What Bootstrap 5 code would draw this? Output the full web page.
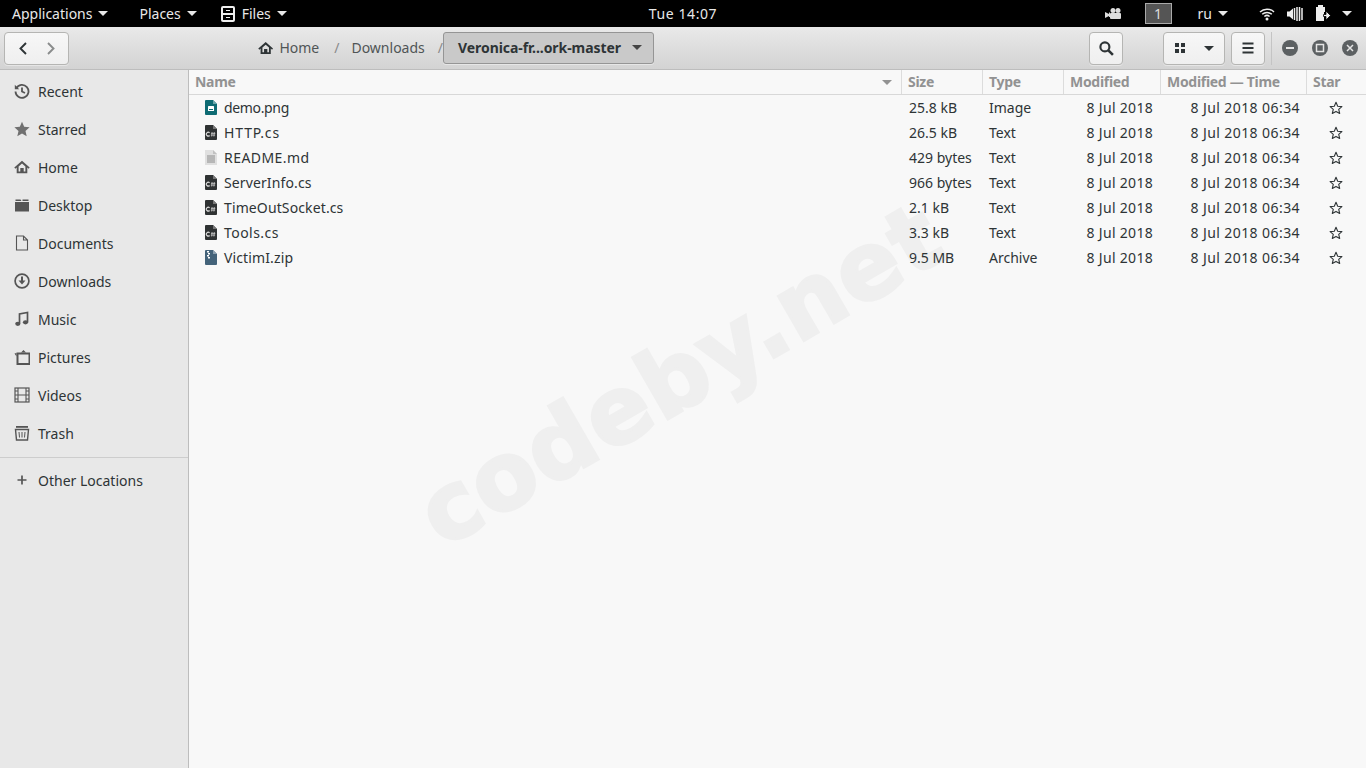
<!DOCTYPE html>
<html lang="en">
<head>
<meta charset="utf-8">
<title>Files</title>
<link href="https://cdn.jsdelivr.net/npm/bootstrap@5.3.0/dist/css/bootstrap.min.css" rel="stylesheet">
<style>
html,body{height:100%;overflow:hidden}
body{font-family:"Noto Sans","Open Sans",sans-serif;font-size:14px;color:#2e3436;background:#f8f8f8}
.shell{height:768px;width:1366px;position:relative;overflow:hidden}
.topbar{height:27px;background:#000;color:#e8e8e8;display:grid;grid-template-columns:1fr auto 1fr;align-items:center;flex:none}
.topleft{padding-left:12px;gap:31px}
.topfiles{margin-left:-7px}
.clock{letter-spacing:.6px}
.topright{padding-right:14px}
.carety{width:0;height:0;border-left:5px solid transparent;border-right:5px solid transparent;border-top:5px solid currentColor;display:inline-block;margin-left:6px;flex:none}
.wsbox{width:27px;height:21px;background:#555;border:1px solid #aaa;color:#ddd;line-height:19px;text-align:center;margin-left:24px;margin-right:2px}
.headbar{height:43px;flex:none;background:linear-gradient(#e9e9e9,#d3d3d3);border-bottom:1px solid #bdbdbd;padding:0 0 0 4px}
.gbtn{height:33px;background:linear-gradient(#f7f7f7,#efefef);border:1px solid #b5b5b3;border-radius:4px;box-shadow:0 1px 0 #fff6;display:flex;align-items:center;justify-content:center;flex:none;color:#2e3436}
.navgroup{width:65px;gap:18px}
.crumbs{margin-left:189px;width:396px;flex:none}
.crumb{color:#505556;padding-bottom:2px}
.crumbsep{color:#8a8a8a;padding-bottom:2px}
.crumbon{height:32px;width:211px;background:#c9c9c9;border:1px solid #959595;border-radius:3px;font-weight:700;color:#2e3436;padding-left:14px;padding-right:11px;padding-bottom:2px;justify-content:space-between;letter-spacing:-.06px}
.searchb{width:34px;margin-left:435px}
.viewb{width:62px;margin-left:40px;padding:0 10px 0 10px;justify-content:space-between}
.menub{width:34px;margin-left:6px}
.vsep{width:1px;height:33px;background:#c4c4c4;margin-left:6px}
.winbtns{gap:14px;margin-left:10px}
.workbody{flex:1;min-height:0}
.sidepane{width:189px;flex:none;background:#e8e8e8;border-right:1px solid #bdbdbd;padding-top:2px}
.sideitem{height:38px;display:flex;align-items:center;padding-left:14px;gap:8px;color:#2e3436}
.sideitem svg{flex:none;color:#555}
.sidedivider{height:1px;background:#cdcdcd;margin:5px 0 3px}
.listpane{flex:1;min-width:0}
.colhead,.filerow{display:grid;grid-template-columns:713px 81px 81px 97px 146px 1fr}
.colhead{height:25px;border-bottom:1px solid #d8d8d8;color:#929292;font-weight:700;align-items:center;letter-spacing:-.3px}
.colhead>div{height:24px;line-height:23px;padding-left:6px;border-right:1px solid #dcdcdc}
.colhead>div:last-child{border-right:0}
.colname{position:relative}
.sorttri{position:absolute;right:9px;top:10px;width:0;height:0;border-left:5px solid transparent;border-right:5px solid transparent;border-top:5px solid #929292}
.filerow{height:25px;align-items:center;position:relative;z-index:1}
.fname{display:flex;align-items:center;gap:7px;padding-left:16px}
.wide-a{letter-spacing:.85px}
.wide-b{letter-spacing:.45px}
.wide-c{letter-spacing:.12px}
.tight-a{letter-spacing:-.35px}
.fsize{padding-left:7px}
.ftype{padding-left:6px}
.fdate{text-align:right;padding-right:7px;letter-spacing:.42px}
.fdate-s{padding-right:8px;letter-spacing:.3px}
.fstar{padding-left:22px;line-height:0}
.mark-wm{position:absolute;left:450px;top:469px;font-family:"DejaVu Sans",sans-serif;font-weight:700;font-size:93px;line-height:93px;color:#efefef;-webkit-text-stroke:3px #efefef;letter-spacing:1px;transform:rotate(-30deg);transform-origin:0 100%;white-space:nowrap;z-index:0}
</style>
</head>
<body>
<svg width="0" height="0" class="position-absolute">
<defs>
<symbol id="ic-cs" viewBox="0 0 12 15"><path d="M0 1a1 1 0 0 1 1-1h7l4 4v10a1 1 0 0 1-1 1H1a1 1 0 0 1-1-1z" fill="#2f3233"/><path d="M8 0l4 4H8z" fill="#777"/><path d="M4.600 7.800a1.900 1.900 0 1 0 0 2.700" fill="none" stroke="#ddd" stroke-width="1.100"/><path d="M7.100 7l-.4 4.500M9.300 7l-.4 4.500M6 8.400h4.300M5.800 10.100h4.300" stroke="#ddd" stroke-width=".7"/></symbol>
<symbol id="ic-star" viewBox="0 0 14 14"><path d="M7 1.300l1.700 3.900 4.200.4-3.200 2.800 1 4.100L7 10.400l-3.700 2.100 1-4.100L1.100 5.600l4.200-.4z" fill="none" stroke="#2e3436" stroke-width="1.100" stroke-linejoin="round"/></symbol>
<symbol id="ic-home" viewBox="0 0 16 16"><path d="M8 1.800L.3 8.500l1.100 1.200L2.700 8.600V14.200h10.600V8.600l1.300 1.100 1.100-1.200zM8 4.600l3.400 3V12.400H9.700V9h-3.400v3.400H4.600V7.600z" fill="currentColor"/></symbol>
</defs>
</svg>
<div class="shell d-flex flex-column">
  <div class="topbar">
    <div class="d-flex align-items-center topleft">
      <span class="d-flex align-items-center">Applications<i class="carety"></i></span>
      <span class="d-flex align-items-center">Places<i class="carety"></i></span>
      <span class="d-flex align-items-center topfiles">
        <svg width="14" height="16" viewBox="0 0 14 16" style="margin-right:7px"><rect width="14" height="16" rx="2" fill="#eee"/><path d="M2 2h10v5H2zM2 9h10v5H2z" fill="#000"/><path d="M5 4h4v1H5zM5 11h4v1H5z" fill="#eee"/></svg>Files<i class="carety"></i></span>
    </div>
    <div class="clock">Tue 14:07</div>
    <div class="d-flex align-items-center justify-content-end topright">
      <svg width="16" height="14" viewBox="0 0 16 14"><path d="M0 5l4 2V5.500h1V10H4V9l-4 2z" fill="#ddd"/><circle cx="8" cy="3.500" r="2.500" fill="#ddd"/><circle cx="13" cy="3.500" r="2.500" fill="#ddd"/><rect x="5" y="6" width="11" height="6" rx="1" fill="#ddd"/></svg>
      <div class="wsbox">1</div>
      <span class="d-flex align-items-center" style="margin-left:24px">ru<i class="carety"></i></span>
      <svg width="16" height="14" viewBox="0 0 16 14" style="margin-left:31px"><path d="M1 5a10 10 0 0 1 14 0M3.200 7.300a7 7 0 0 1 9.600 0M5.400 9.500a4 4 0 0 1 5.200 0" fill="none" stroke="#eee" stroke-width="1.500"/><circle cx="8" cy="12" r="1.500" fill="#eee"/></svg>
      <svg width="16" height="16" viewBox="0 0 16 16" style="margin-left:12px"><path d="M0 5.500h2.500L6 2.500v11L2.500 10.500H0z" fill="#eee"/><path d="M7.500 2v12M10 1v14M12.500 1v14M15 2v12" stroke="#eee" stroke-width="1.500"/></svg>
      <svg width="16" height="17" viewBox="0 0 16 17" style="margin-left:12px"><path d="M3 0h5v2h2v5H9v9H1V2h2z" fill="#eee"/><path d="M11 6v3.500H8.500v2H11V15l4.500-4.500z" fill="#eee" stroke="#000" stroke-width=".8"/></svg>
      <i class="carety" style="margin-left:11px"></i>
    </div>
  </div>

  <div class="headbar d-flex align-items-center">
    <div class="gbtn navgroup">
      <svg width="10" height="13" viewBox="0 0 10 13"><path d="M8 1L2.500 6.500 8 12" fill="none" stroke="#2e3436" stroke-width="1.900"/></svg>
      <svg width="10" height="13" viewBox="0 0 10 13"><path d="M2 1l5.500 5.500L2 12" fill="none" stroke="#8a8c8c" stroke-width="1.900"/></svg>
    </div>
    <div class="crumbs d-flex align-items-center">
      <svg width="16" height="16" style="color:#2e3436"><use href="#ic-home"/></svg>
      <span class="crumb" style="margin-left:6px">Home</span>
      <span class="crumbsep" style="margin-left:15px">/</span>
      <span class="crumb" style="margin-left:12px">Downloads</span>
      <span class="crumbsep" style="margin-left:13px">/</span>
      <div class="gbtn crumbon flex-shrink-0"><span>Veronica-fr...ork-master</span><i class="carety m-0" style="color:#444"></i></div>
    </div>
    <div class="gbtn searchb"><svg width="15" height="15" viewBox="0 0 14 14"><circle cx="5.500" cy="5.500" r="4.200" fill="none" stroke="#2e3436" stroke-width="2"/><path d="M8.500 8.500L13 13" stroke="#2e3436" stroke-width="2.400"/></svg></div>
    <div class="gbtn viewb"><svg width="12" height="12" viewBox="0 0 12 12"><path d="M1 1h4v4H1zM7 1h4v4H7zM1 7h4v4H1zM7 7h4v4H7z" fill="#2e3436"/></svg><i class="carety m-0"></i></div>
    <div class="gbtn menub"><svg width="12" height="12" viewBox="0 0 12 12"><path d="M.5 1.500h11M.5 6h11M.5 10.500h11" stroke="#2e3436" stroke-width="2"/></svg></div>
    <div class="vsep"></div>
    <div class="d-flex align-items-center winbtns">
      <svg width="16" height="16" viewBox="0 0 16 16"><circle cx="8" cy="8" r="8" fill="#5c6062"/><path d="M4 7h8v2H4z" fill="#e4e4e4"/></svg>
      <svg width="16" height="16" viewBox="0 0 16 16"><circle cx="8" cy="8" r="8" fill="#5c6062"/><rect x="4.500" y="4.500" width="7" height="7" fill="none" stroke="#e4e4e4" stroke-width="1.500"/></svg>
      <svg width="16" height="16" viewBox="0 0 16 16"><circle cx="8" cy="8" r="8" fill="#5c6062"/><path d="M5 5l6 6M11 5l-6 6" stroke="#e4e4e4" stroke-width="1.500"/></svg>
    </div>
  </div>

  <div class="workbody d-flex">
    <div class="sidepane">
      <div class="sideitem"><svg width="16" height="16" viewBox="0 0 16 16"><path d="M2.300 5.200A6.500 6.500 0 1 1 1.500 8.500" fill="none" stroke="currentColor" stroke-width="1.800"/><path d="M.8 1.800v4.400h4.400z" fill="currentColor"/><path d="M8 4.500V8.500l3 1.500" fill="none" stroke="currentColor" stroke-width="1.800"/></svg>Recent</div>
      <div class="sideitem"><svg width="16" height="16" viewBox="0 0 16 16"><path d="M8 .8l2.200 5 5.400.5-4.100 3.600 1.200 5.300L8 12.400l-4.700 2.800 1.200-5.300L.4 6.300l5.400-.5z" fill="#707070"/></svg>Starred</div>
      <div class="sideitem"><svg width="16" height="16"><use href="#ic-home"/></svg>Home</div>
      <div class="sideitem"><svg width="16" height="16" viewBox="0 0 15 16"><path d="M1 2.500h5l1 1.500H1zM.5 5h14v9.500H.5z" fill="currentColor"/><path d="M8 2.500h6V4H8z" fill="currentColor"/></svg>Desktop</div>
      <div class="sideitem"><svg width="16" height="16" viewBox="0 0 16 16"><path d="M2.500 1h7l4 4v10h-11zM9.500 1v4h4" fill="none" stroke="currentColor" stroke-width="1.100"/></svg>Documents</div>
      <div class="sideitem"><svg width="16" height="16" viewBox="0 0 16 16"><circle cx="8" cy="8" r="6.900" fill="none" stroke="currentColor" stroke-width="1.700"/><path d="M7 3.500h2v4h2.500L8 11.500 4.500 7.500H7z" fill="currentColor"/></svg>Downloads</div>
      <div class="sideitem"><svg width="16" height="16" viewBox="0 0 16 16"><path d="M5.500 12.500V3l8-1.500V11" fill="none" stroke="currentColor" stroke-width="1.700"/><ellipse cx="3.800" cy="12.800" rx="2.600" ry="2.100" fill="currentColor"/><ellipse cx="11.500" cy="11.300" rx="2.600" ry="2.100" fill="currentColor"/></svg>Music</div>
      <div class="sideitem"><svg width="16" height="16" viewBox="0 0 16 16"><path d="M3.500 4.500h12V15h-12z" fill="none" stroke="currentColor" stroke-width="2"/><path d="M7 3.500L9.500 1 12 3.500zM.5 4.500l2-.6v3.600z" fill="currentColor"/></svg>Pictures</div>
      <div class="sideitem"><svg width="16" height="16" viewBox="0 0 16 16"><rect x="1" y="1" width="14" height="14" fill="none" stroke="currentColor" stroke-width="1.200"/><path d="M4 1v14M12 1v14M4 8h8M1 4h3M1 8h3M1 12h3M12 4h3M12 8h3M12 12h3" stroke="currentColor" stroke-width="1.100"/></svg>Videos</div>
      <div class="sideitem"><svg width="16" height="16" viewBox="0 0 16 16"><path d="M2 1h12v1.800H2z" fill="currentColor"/><path d="M1.500 4.500h13l-1 10.500h-11z" fill="none" stroke="currentColor" stroke-width="1.400"/><path d="M5 7l.5 5.500M8 7v5.500M11 7l-.5 5.500" stroke="currentColor" stroke-width="1"/></svg>Trash</div>
      <div class="sidedivider"></div>
      <div class="sideitem"><svg width="16" height="16" viewBox="0 0 16 16"><path d="M8 3.500v9M3.500 8h9" stroke="currentColor" stroke-width="1.700"/></svg>Other Locations</div>
    </div>

    <div class="listpane">
      <div class="colhead">
        <div class="colname">Name<i class="sorttri"></i></div><div>Size</div><div>Type</div><div>Modified</div><div>Modified — Time</div><div>Star</div>
      </div>
      <div class="filerow"><div class="fname"><svg width="12" height="15" viewBox="0 0 12 15"><path d="M0 1a1 1 0 0 1 1-1h7l4 4v10a1 1 0 0 1-1 1H1a1 1 0 0 1-1-1z" fill="#0e6b73"/><path d="M8 0l4 4H8z" fill="#6aa5aa"/><rect x="3" y="6" width="6" height="5" rx=".5" fill="#fff"/><rect x="4" y="9" width="4" height="1" fill="#0e6b73"/></svg><span class="tight-a">demo.png</span></div><div class="fsize">25.8 kB</div><div class="ftype">Image</div><div class="fdate fdate-s">8 Jul 2018</div><div class="fdate">8 Jul 2018 06:34</div><div class="fstar"><svg width="14" height="14"><use href="#ic-star"/></svg></div></div>
      <div class="filerow"><div class="fname"><svg width="12" height="15"><use href="#ic-cs"/></svg><span class="wide-a">HTTP.cs</span></div><div class="fsize">26.5 kB</div><div class="ftype">Text</div><div class="fdate fdate-s">8 Jul 2018</div><div class="fdate">8 Jul 2018 06:34</div><div class="fstar"><svg width="14" height="14"><use href="#ic-star"/></svg></div></div>
      <div class="filerow"><div class="fname"><svg width="12" height="15" viewBox="0 0 12 15"><path d="M0 0h8l4 4v11H0z" fill="#e0e0e0"/><path d="M8 0l4 4H8z" fill="#c2c2c2"/><path d="M2 6h8M2 8h8M2 10h8M2 12h8" stroke="#858585" stroke-width=".9"/></svg><span class="wide-b">README.md</span></div><div class="fsize">429 bytes</div><div class="ftype">Text</div><div class="fdate fdate-s">8 Jul 2018</div><div class="fdate">8 Jul 2018 06:34</div><div class="fstar"><svg width="14" height="14"><use href="#ic-star"/></svg></div></div>
      <div class="filerow"><div class="fname"><svg width="12" height="15"><use href="#ic-cs"/></svg><span class="wide-c">ServerInfo.cs</span></div><div class="fsize">966 bytes</div><div class="ftype">Text</div><div class="fdate fdate-s">8 Jul 2018</div><div class="fdate">8 Jul 2018 06:34</div><div class="fstar"><svg width="14" height="14"><use href="#ic-star"/></svg></div></div>
      <div class="filerow"><div class="fname"><svg width="12" height="15"><use href="#ic-cs"/></svg><span class="wide-c">TimeOutSocket.cs</span></div><div class="fsize">2.1 kB</div><div class="ftype">Text</div><div class="fdate fdate-s">8 Jul 2018</div><div class="fdate">8 Jul 2018 06:34</div><div class="fstar"><svg width="14" height="14"><use href="#ic-star"/></svg></div></div>
      <div class="filerow"><div class="fname"><svg width="12" height="15"><use href="#ic-cs"/></svg><span class="wide-b">Tools.cs</span></div><div class="fsize">3.3 kB</div><div class="ftype">Text</div><div class="fdate fdate-s">8 Jul 2018</div><div class="fdate">8 Jul 2018 06:34</div><div class="fstar"><svg width="14" height="14"><use href="#ic-star"/></svg></div></div>
      <div class="filerow"><div class="fname"><svg width="12" height="15" viewBox="0 0 12 15"><path d="M0 1a1 1 0 0 1 1-1h7l4 4v10a1 1 0 0 1-1 1H1a1 1 0 0 1-1-1z" fill="#44637a"/><path d="M8 0l4 4H8z" fill="#8ba0b0"/><path d="M2 1h2v1.500H2zM3 3h2v1.500H3zM2 5h2v1.500H2zM3 7h2v1.500H3z" fill="#fff"/></svg><span class="wide-c">VictimI.zip</span></div><div class="fsize">9.5 MB</div><div class="ftype">Archive</div><div class="fdate fdate-s">8 Jul 2018</div><div class="fdate">8 Jul 2018 06:34</div><div class="fstar"><svg width="14" height="14"><use href="#ic-star"/></svg></div></div>
    </div>
  </div>
  <div class="mark-wm">codeby.net</div>
</div>
<script src="https://cdn.jsdelivr.net/npm/bootstrap@5.3.0/dist/js/bootstrap.bundle.min.js"></script>
</body>
</html>
